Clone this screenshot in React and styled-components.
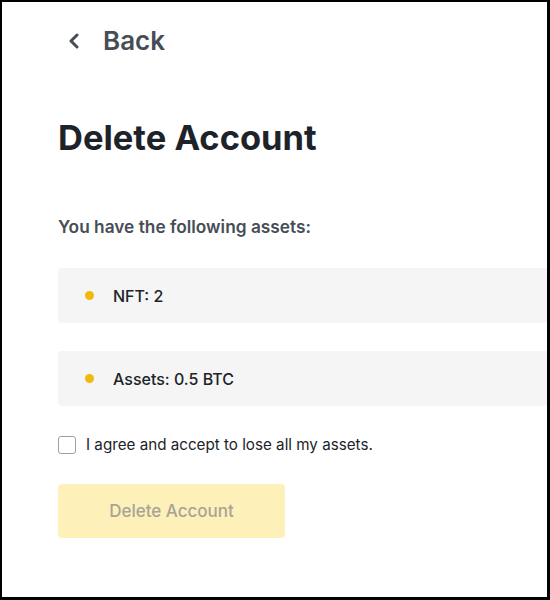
import React, { useState } from 'react';
import styled, { createGlobalStyle } from 'styled-components';

const Global = createGlobalStyle`
  html, body {
    margin: 0;
    padding: 0;
    background: #000;
  }
  * {
    box-sizing: border-box;
  }
`;

const Frame = styled.div`
  width: 550px;
  height: 600px;
  border-style: solid;
  border-color: #000;
  border-width: 2px 3px 3px 2px;
  background: #fff;
  overflow: hidden;
  font-family: Inter, "Noto Sans", sans-serif;
`;

const Page = styled.div`
  width: 620px;
  padding: 0 0 0 56px;
  display: flex;
  flex-direction: column;
`;

const BackLink = styled.button`
  display: flex;
  align-items: center;
  gap: 23px;
  margin: 23px 0 0 10px;
  padding: 0;
  border: none;
  background: none;
  color: #474d57;
  font-family: inherit;
  font-size: 26px;
  font-weight: 600;
  cursor: pointer;
  align-self: flex-start;
`;

const Title = styled.h1`
  margin: 57px 0 0 0;
  font-size: 34.5px;
  font-weight: 700;
  color: #1e2329;
  line-height: 50px;
`;

const Subtitle = styled.p`
  margin: 52px 0 0 0;
  font-size: 17.3px;
  font-weight: 600;
  color: #474d57;
  line-height: 24px;
`;

const AssetList = styled.div`
  display: flex;
  flex-direction: column;
  gap: 28px;
  margin: 29px 0 0 0;
`;

const AssetRow = styled.div`
  height: 55px;
  display: flex;
  align-items: center;
  gap: 19px;
  padding-left: 27px;
  background: #f5f5f5;
  border-radius: 4px;
  color: #1e2329;
  font-size: 16px;
  font-weight: 500;
`;

const Dot = styled.span`
  width: 9px;
  height: 9px;
  border-radius: 50%;
  background: #f0b90b;
`;

const Agree = styled.label`
  display: flex;
  align-items: center;
  gap: 10px;
  margin: 29px 0 0 0;
  color: #1e2329;
  font-size: 15.2px;
  cursor: pointer;
`;

const Box = styled.span`
  width: 18px;
  height: 18px;
  border: 1px solid ${p => (p.$checked ? '#f0b90b' : '#a0a0a0')};
  border-radius: 3px;
  background: ${p => (p.$checked ? '#f0b90b' : '#fff')};
`;

const DeleteButton = styled.button`
  align-self: flex-start;
  width: 227px;
  height: 54px;
  margin: 30px 0 0 0;
  border: none;
  border-radius: 4px;
  background: #fdf0b8;
  color: #a6a49a;
  font-family: inherit;
  font-size: 17px;
  font-weight: 500;
`;

function Chevron() {
  return (
    <svg width="12" height="16" viewBox="0 0 12 16">
      <path d="M9 2 L3 8 L9 14" fill="none" stroke="#474d57" strokeWidth="3" strokeLinecap="round" strokeLinejoin="round" />
    </svg>
  );
}

export default function App() {
  const [agreed, setAgreed] = useState(false);
  const assets = ['NFT: 2', 'Assets: 0.5 BTC'];

  return (
    <Frame>
      <Global />
      <Page>
        <BackLink>
          <Chevron />
          Back
        </BackLink>
        <Title>Delete Account</Title>
        <Subtitle>You have the following assets:</Subtitle>
        <AssetList>
          {assets.map(a => (
            <AssetRow key={a}>
              <Dot />
              {a}
            </AssetRow>
          ))}
        </AssetList>
        <Agree onClick={() => setAgreed(!agreed)}>
          <Box $checked={agreed} />
          I agree and accept to lose all my assets.
        </Agree>
        <DeleteButton disabled={!agreed}>Delete Account</DeleteButton>
      </Page>
    </Frame>
  );
}
